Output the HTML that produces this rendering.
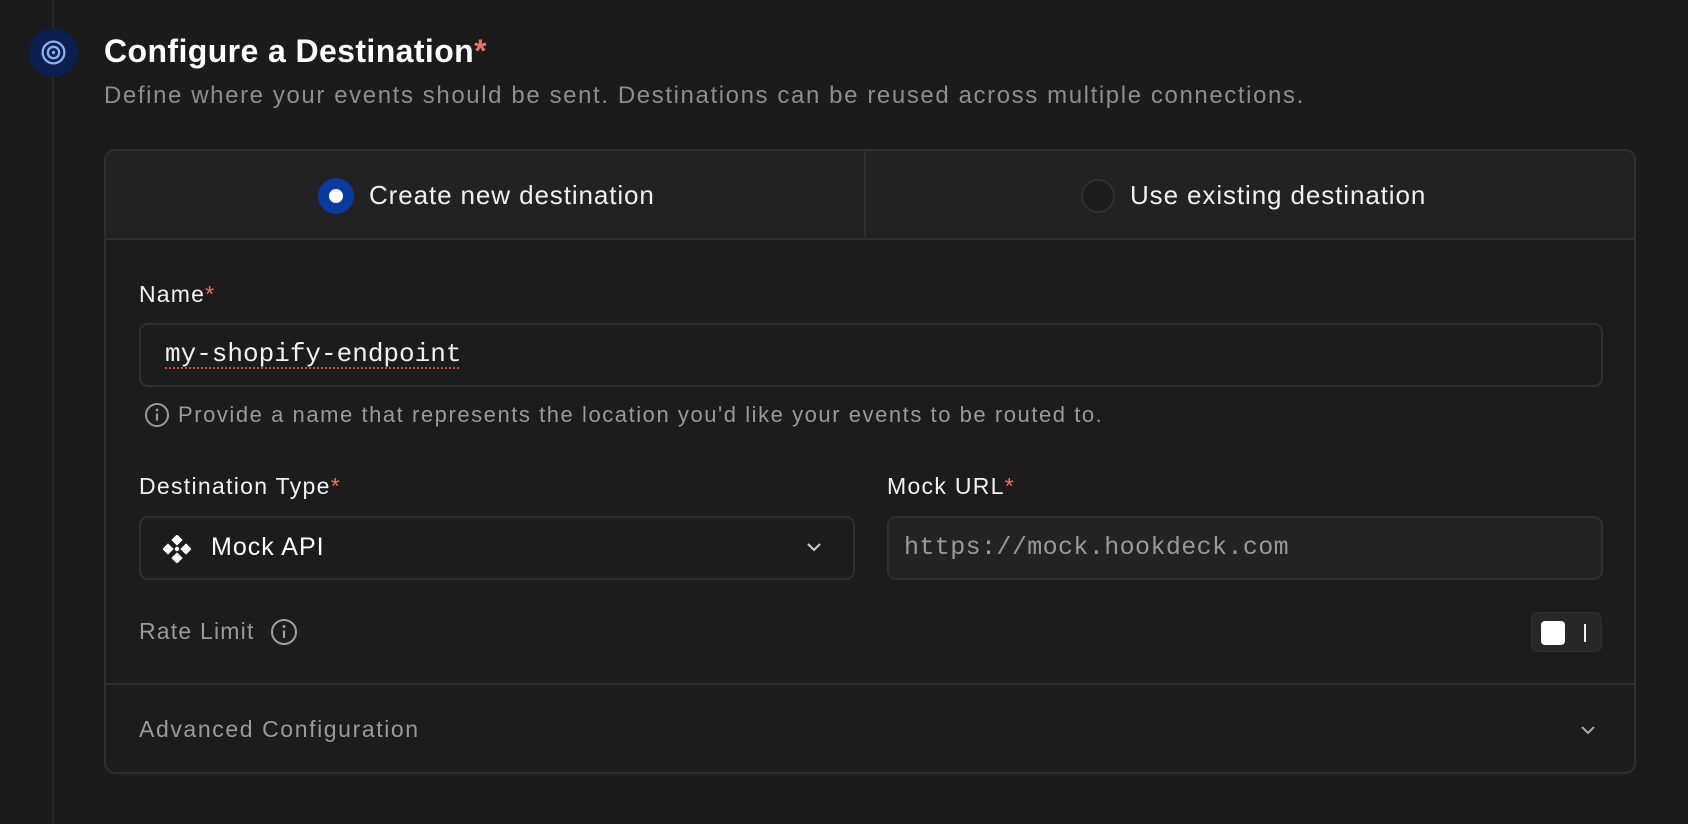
<!DOCTYPE html>
<html><head><meta charset="utf-8"><style>
*{box-sizing:border-box;margin:0;padding:0}
body{width:1688px;height:824px;background:#1b1b1b;font-family:"Liberation Sans",sans-serif;color:#f2f2f2;position:relative;overflow:hidden}
.a{position:absolute;white-space:nowrap}
.req{color:#e5736a}
.mono{font-family:"Liberation Mono",monospace}
</style></head><body>
<div class="a" style="left:52px;top:0;width:2px;height:824px;background:#262626"></div>
<div class="a" style="left:29px;top:28px;width:49px;height:49px;border-radius:50%;background:#0c1f52"></div>
<svg class="a" style="left:38px;top:37px" width="31" height="31" viewBox="0 0 30 30"><circle cx="15" cy="15" r="10.5" fill="none" stroke="#8fb0ef" stroke-width="2.2"/><circle cx="15" cy="15" r="5.5" fill="none" stroke="#8fb0ef" stroke-width="2.2"/><circle cx="15" cy="15" r="1.6" fill="#8fb0ef"/></svg>
<div class="a" style="left:104px;top:33px;font-size:32px;font-weight:bold;color:#fff;letter-spacing:0.4px">Configure a Destination<span class="req">*</span></div>
<div class="a" style="left:104px;top:82px;font-size:24px;color:#8e8e8e;letter-spacing:1.6px">Define where your events should be sent. Destinations can be reused across multiple connections.</div>

<div class="a" style="left:104px;top:149px;width:1532px;height:625px;border:2px solid #2f2f2f;border-radius:11px;background:#1c1c1c;overflow:hidden">
  <div class="a" style="left:0;top:0;width:1530px;height:89px;background:#222;border-bottom:2px solid #2f2f2f"></div>
  <div class="a" style="left:758px;top:0;width:2px;height:89px;background:#2f2f2f"></div>
  <div class="a" style="left:212px;top:27px;width:36px;height:36px;border-radius:50%;background:#0a3aa0"></div>
  <div class="a" style="left:223px;top:38px;width:14px;height:14px;border-radius:50%;background:#fff"></div>
  <div class="a" style="left:263px;top:29px;font-size:26px;color:#f0f0f0;letter-spacing:0.9px">Create new destination</div>
  <div class="a" style="left:975px;top:28px;width:34px;height:34px;border-radius:50%;background:#1c1c1c;border:2px solid #2f2f2f"></div>
  <div class="a" style="left:1024px;top:29px;font-size:26px;color:#f0f0f0;letter-spacing:0.9px">Use existing destination</div>

  <div class="a" style="left:33px;top:130px;font-size:23px;color:#f2f2f2;letter-spacing:1.2px">Name<span class="req">*</span></div>
  <div class="a" style="left:33px;top:172px;width:1464px;height:64px;border:2px solid #2f2f2f;border-radius:9px;background:#1c1c1c"></div>
  <div class="a mono" style="left:59px;top:188px;font-size:26px;color:#f2f2f2;text-decoration:underline dotted #d9433a;text-underline-offset:6px;text-decoration-thickness:2px">my-shopify-endpoint</div>
  <svg class="a" style="left:38px;top:251px" width="26" height="26" viewBox="0 0 26 26"><circle cx="13" cy="13" r="11" fill="none" stroke="#9a9a9a" stroke-width="2"/><line x1="13" y1="11.5" x2="13" y2="18.5" stroke="#9a9a9a" stroke-width="2.2"/><circle cx="13" cy="8" r="1.4" fill="#9a9a9a"/></svg>
  <div class="a" style="left:72px;top:251px;font-size:22px;color:#9a9a9a;letter-spacing:1.55px">Provide a name that represents the location you'd like your events to be routed to.</div>

  <div class="a" style="left:33px;top:322px;font-size:23px;color:#f2f2f2;letter-spacing:1.3px">Destination Type<span class="req">*</span></div>
  <div class="a" style="left:781px;top:322px;font-size:23px;color:#f2f2f2;letter-spacing:1.3px">Mock URL<span class="req">*</span></div>
  <div class="a" style="left:33px;top:365px;width:716px;height:64px;border:2px solid #2f2f2f;border-radius:9px;background:#1c1c1c"></div>
  <svg class="a" style="left:57px;top:384px" width="28" height="28" viewBox="0 0 28 28" fill="#fff"><rect x="10" y="1" width="8" height="8" transform="rotate(45 14 5)"/><rect x="1" y="10" width="8" height="8" transform="rotate(45 5 14)"/><rect x="19" y="10" width="8" height="8" transform="rotate(45 23 14)"/><rect x="10" y="19" width="8" height="8" transform="rotate(45 14 23)"/><circle cx="14" cy="14" r="2.2"/></svg>
  <div class="a" style="left:105px;top:382px;font-size:25px;color:#fff;letter-spacing:1px">Mock API</div>
  <svg class="a" style="left:700px;top:390px" width="16" height="12" viewBox="0 0 16 12"><path d="M2 3l6 6 6-6" fill="none" stroke="#cfcfcf" stroke-width="2"/></svg>
  <div class="a" style="left:781px;top:365px;width:716px;height:64px;border:2px solid #2f2f2f;border-radius:9px;background:#232323"></div>
  <div class="a mono" style="left:798px;top:382px;font-size:25px;color:#9a9a9a;letter-spacing:0.4px">https://mock.hookdeck.com</div>

  <div class="a" style="left:33px;top:467px;font-size:23px;color:#9a9a9a;letter-spacing:1.2px">Rate Limit</div>
  <svg class="a" style="left:164px;top:467px" width="28" height="28" viewBox="0 0 28 28"><circle cx="14" cy="14" r="12" fill="none" stroke="#a0a0a0" stroke-width="2"/><line x1="14" y1="12.5" x2="14" y2="20" stroke="#a0a0a0" stroke-width="2.2"/><circle cx="14" cy="8.5" r="1.5" fill="#a0a0a0"/></svg>
  <div class="a" style="left:1425px;top:461px;width:71px;height:40px;border-radius:7px;background:#272727;border:1px solid #303030"></div>
  <div class="a" style="left:1435px;top:470px;width:24px;height:24px;border-radius:4px;background:#fff"></div>
  <div class="a" style="left:1478px;top:473px;width:2px;height:18px;background:#eee"></div>

  <div class="a" style="left:0;top:532px;width:1530px;height:2px;background:#2f2f2f"></div>
  <div class="a" style="left:33px;top:565px;font-size:23px;color:#9a9a9a;letter-spacing:1.6px">Advanced Configuration</div>
  <svg class="a" style="left:1474px;top:573px" width="16" height="12" viewBox="0 0 16 12"><path d="M2 3l6 6 6-6" fill="none" stroke="#a8a8a8" stroke-width="2"/></svg>
</div>
</body></html>
